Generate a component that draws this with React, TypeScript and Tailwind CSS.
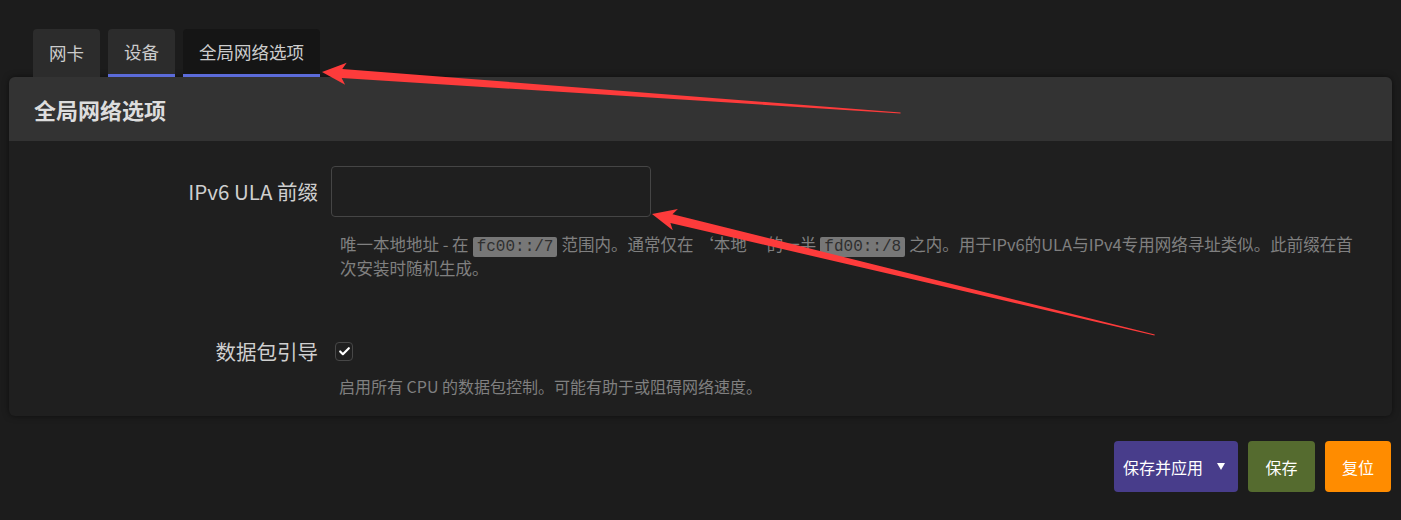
import { Check } from "lucide-react";

const tabs = [
  { name: "网卡", active: false, line: false },
  { name: "设备", active: false, line: true },
  { name: "全局网络选项", active: true, line: true },
];

type ArrowProps = { x: number; y: number; angle: number; len: number };

const Arrow = ({ x, y, angle, len }: ArrowProps) => (
  <g transform={`translate(${x} ${y}) rotate(${angle})`}>
    <polygon
      points={`0,0 24,-11 20,-4.5 ${len},-0.5 ${len},0.5 20,4.5 24,11`}
      fill="#fd3b3b"
    />
  </g>
);

const Code = ({ children }: { children: string }) => (
  <code className="inline-block leading-[20px] bg-[#777777] text-[#2f2f2f] px-[4px] rounded-[2px] font-['Liberation_Mono',monospace] text-[16px] mx-[4px]">
    {children}
  </code>
);

const App = () => {
  return (
    <div className="relative w-[1401px] h-[520px] bg-[#1c1c1c] font-['Noto_Sans_CJK_SC',sans-serif] overflow-hidden">
      <div className="px-[9px] pt-[29px]">
        {/* tabs */}
        <div className="flex gap-[8px] pl-[24px]">
          {tabs.map((tab) => (
            <div
              key={tab.name}
              className={
                "h-[48px] px-[16px] flex items-center rounded-t-[4px] text-[17.5px] text-[#cccccc] " +
                (tab.active ? "bg-[#151515] " : "bg-[#2c2c2c] ") +
                (tab.line ? "border-b-[3px] border-[#5b6bd9] pt-[1px]" : "")
              }
            >
              {tab.name}
            </div>
          ))}
        </div>

        {/* panel */}
        <div className="rounded-[6px] bg-[#1f1f1f] shadow-[0_0_6px_rgba(0,0,0,0.5)] overflow-hidden">
          <div className="h-[64px] bg-[#333333] flex items-center pl-[25px]">
            <h2 className="text-[22px] font-bold text-[#dddddd]">全局网络选项</h2>
          </div>

          <div className="pt-[25px] pb-[19px]">
            {/* ipv6 ula */}
            <div className="flex">
              <div className="w-[309px] h-[51px] flex items-center justify-end text-[20.5px] text-[#cfcfcf]">
                IPv6 ULA 前缀
              </div>
              <div className="ml-[13px]">
                <input
                  type="text"
                  className="w-[320px] h-[51px] rounded-[4px] border border-[#454545] bg-transparent outline-none"
                />
                <div className="w-[1032px] pl-[9px] mt-[16px] text-[16.5px] leading-[22px] text-[#808080]">
                  唯一本地地址 - 在<Code>fc00::/7</Code>范围内。通常仅在 ‘本地’ 的一半<Code>fd00::/8</Code>之内。用于IPv6的ULA与IPv4专用网络寻址类似。此前缀在首次安装时随机生成。
                </div>
              </div>
            </div>

            {/* packet steering */}
            <div className="flex mt-[57px]">
              <div className="w-[309px] h-[30px] flex items-center justify-end text-[20.5px] text-[#cfcfcf]">
                数据包引导
              </div>
              <div className="ml-[13px]">
                <div className="h-[30px] flex items-center pl-[4px]">
                  <div className="w-[18px] h-[19px] rounded-[4px] border border-[#474747] flex items-center justify-center">
                    <Check size={13} strokeWidth={4} className="text-white" />
                  </div>
                </div>
                <div className="pl-[8px] mt-[9px] text-[16px] leading-[22px] text-[#808080]">
                  启用所有 CPU 的数据包控制。可能有助于或阻碍网络速度。
                </div>
              </div>
            </div>
          </div>
        </div>

        {/* actions */}
        <div className="flex justify-end gap-[10px] mt-[25px] pr-[1px]">
          <button className="h-[51px] w-[124px] rounded-[4px] bg-[#483d8b] text-white text-[16px] flex items-center pl-[9px] gap-[14px]">
            保存并应用
            <svg width="8" height="7" viewBox="0 0 8 7">
              <polygon points="0,0 8,0 4,7" fill="#ffffff" />
            </svg>
          </button>
          <button className="h-[51px] w-[67px] rounded-[4px] bg-[#556b2f] text-white text-[16px]">保存</button>
          <button className="h-[51px] w-[66px] rounded-[4px] bg-[#ff8c00] text-white text-[16px]">复位</button>
        </div>
      </div>

      {/* annotation arrows */}
      <svg className="absolute inset-0 pointer-events-none" width="1401" height="520">
        <Arrow x={322} y={72} angle={4.06} len={580} />
        <Arrow x={652} y={214} angle={13.53} len={517} />
      </svg>
    </div>
  );
};

export default App;
